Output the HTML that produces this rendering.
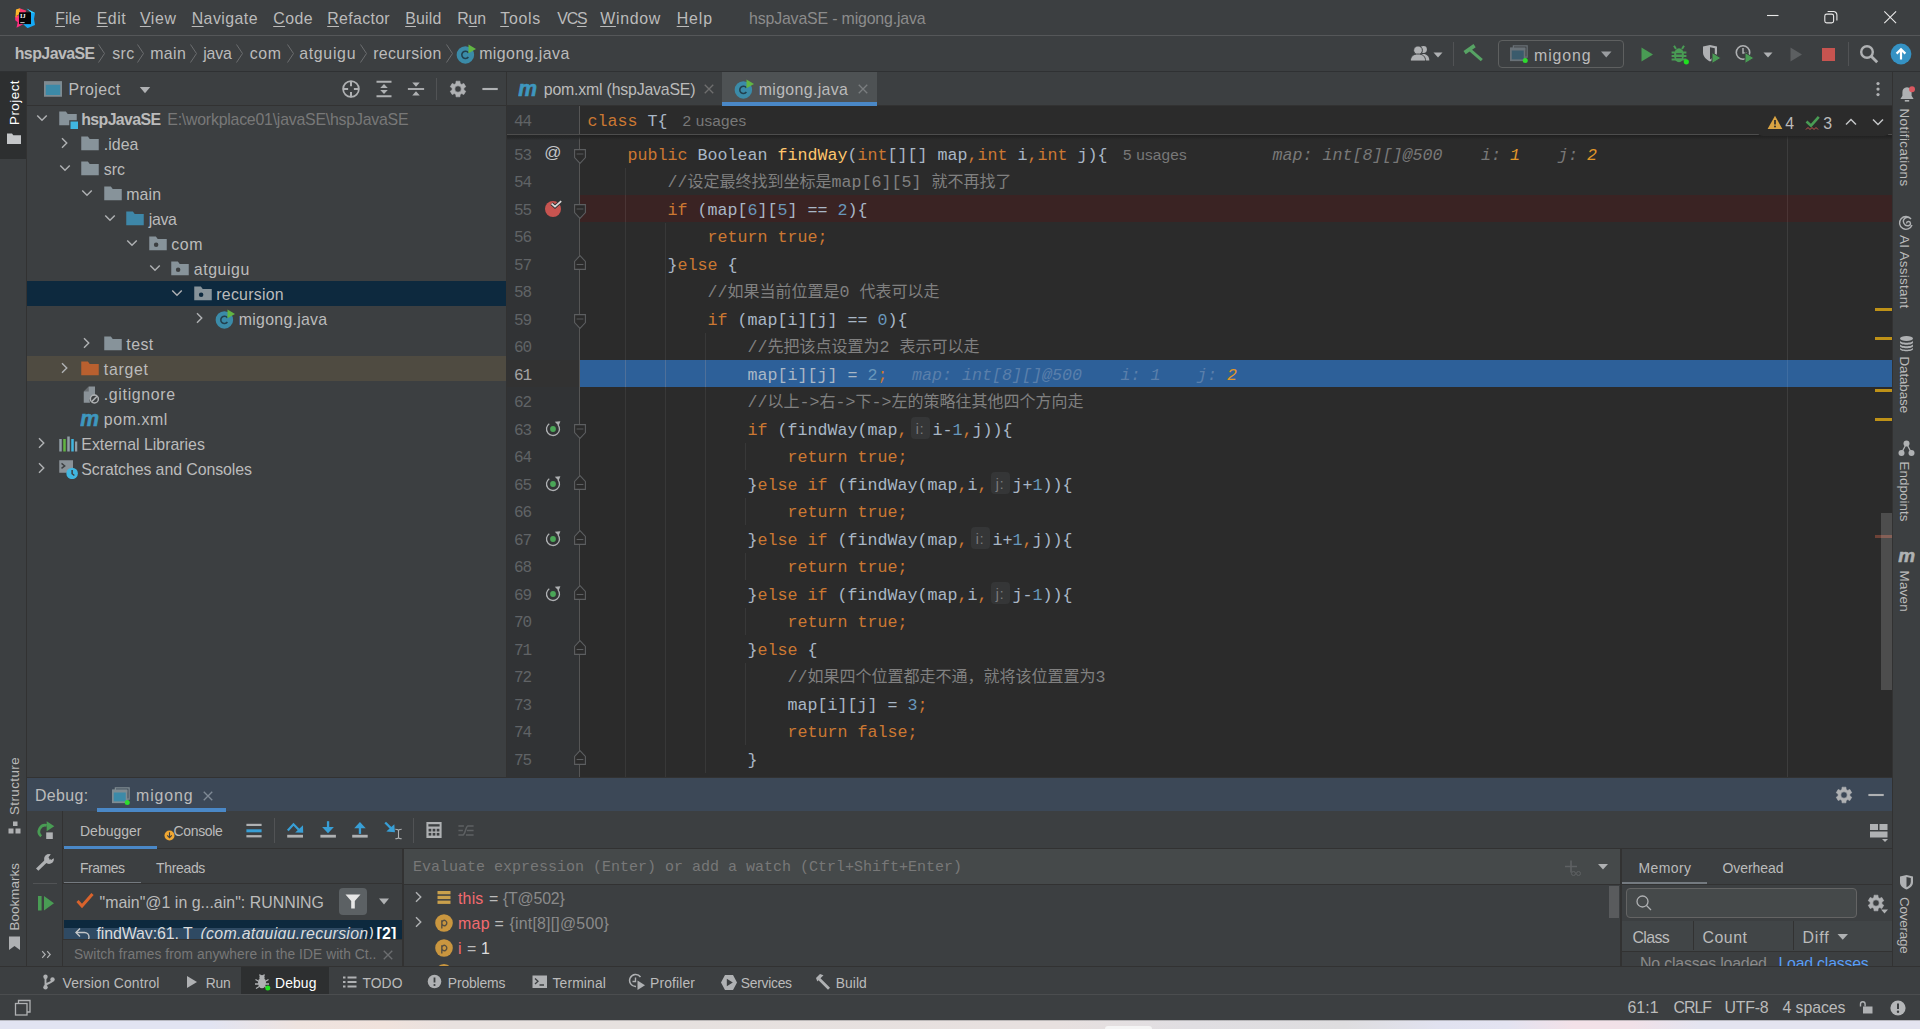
<!DOCTYPE html><html lang="en"><head><meta charset="utf-8"><title>hspJavaSE - migong.java</title><style>html,body{margin:0;padding:0}body{width:1920px;height:1029px;overflow:hidden;position:relative;background:#3c3f41;font-family:"Liberation Sans","Noto Sans CJK SC",sans-serif;font-size:15px;color:#bbb}.a{position:absolute}.t{position:absolute;white-space:pre;line-height:20px}.m{font-family:"Liberation Mono","Noto Sans CJK SC",monospace}u{text-decoration-thickness:1px;text-underline-offset:2px}</style></head><body><header class="a" id="titlebar" style="left:0;top:0">
<div class="a" style="left:0px;top:0px;width:1920px;height:36px;background:#3c3f41;"></div>
<div class="a" style="left:0px;top:35px;width:1920px;height:1px;background:#555759;"></div>
<svg class="a" style="left:15px;top:8px;" width="20" height="20" viewBox="0 0 20 20"><path d="M1 1.500L4.8 0.2 7 4.5 0.5 8.500z" fill="#fcb62a"/><path d="M4.6 0.300l6.8 2.4-2 3-4.4-.200z" fill="#fb3a6f"/><path d="M0.2 8.500l4-1.5 4.5 9-7.2 3.8 1.2-5.6-2.5-2z" fill="#fd2f7e"/><path d="M0.2 8.500l1.8-2 .5 3.500z" fill="#fd8a1c"/><path d="M11.5 0.500L20 5l-1 6 1 6-7.5 3.200L8 16l8-1V4z" fill="#15a9f5"/><path d="M11.5 0.500l5 4.5 3.5 0z" fill="#3bd0fb"/><rect x="4" y="4.3" width="12" height="11.8" fill="#070707"/><rect x="5.3" y="14.3" width="4.3" height="0.8" fill="#fff"/><text x="5" y="10.2" font-family="Liberation Serif,serif" font-size="6.2" font-weight="700" fill="#fff">IJ</text></svg>
<span class="t" style="left:55.2px;top:9px;font-size:15.9px;letter-spacing:0.044px;"><u>F</u>ile</span>
<span class="t" style="left:96.7px;top:9px;font-size:15.9px;letter-spacing:0.523px;"><u>E</u>dit</span>
<span class="t" style="left:139.89999999999998px;top:9px;font-size:15.9px;letter-spacing:0.611px;"><u>V</u>iew</span>
<span class="t" style="left:191.7px;top:9px;font-size:15.9px;letter-spacing:0.446px;"><u>N</u>avigate</span>
<span class="t" style="left:273.2px;top:9px;font-size:15.9px;letter-spacing:0.450px;"><u>C</u>ode</span>
<span class="t" style="left:327.2px;top:9px;font-size:15.9px;letter-spacing:0.340px;"><u>R</u>efactor</span>
<span class="t" style="left:405.2px;top:9px;font-size:15.9px;letter-spacing:0.188px;"><u>B</u>uild</span>
<span class="t" style="left:457.2px;top:9px;font-size:15.9px;letter-spacing:-0.124px;">R<u>u</u>n</span>
<span class="t" style="left:500.2px;top:9px;font-size:15.9px;letter-spacing:0.738px;"><u>T</u>ools</span>
<span class="t" style="left:557.2px;top:9px;font-size:15.9px;letter-spacing:-1.129px;">VC<u>S</u></span>
<span class="t" style="left:600.2px;top:9px;font-size:15.9px;letter-spacing:0.711px;"><u>W</u>indow</span>
<span class="t" style="left:676.7px;top:9px;font-size:15.9px;letter-spacing:0.899px;"><u>H</u>elp</span>
<span class="t" style="left:749px;top:9px;font-size:15.9px;color:#8c8c8c;letter-spacing:-0.161px;">hspJavaSE - migong.java</span>
<svg class="a" style="left:1760px;top:5px;" width="24" height="24" viewBox="0 0 24 24"><path d="M7 10.500h11.5" stroke="#e8e8e8" stroke-width="1.1"/></svg>
<svg class="a" style="left:1818px;top:6px;" width="24" height="24" viewBox="0 0 24 24"><rect x="6.8" y="8.1" width="8.8" height="8.8" rx="1.9" fill="none" stroke="#e8e8e8" stroke-width="1.1"/><path d="M9.6 5.500h5.900a3.4 3.4 0 0 1 3.4 3.400v5.7" fill="none" stroke="#e8e8e8" stroke-width="1.1"/></svg>
<svg class="a" style="left:1878px;top:6px;" width="24" height="24" viewBox="0 0 24 24"><path d="M6.3 5.300l11.8 11.800M18.1 5.300L6.3 17.1" stroke="#e8e8e8" stroke-width="1.1"/></svg>
<div class="a" style="left:0px;top:36px;width:1920px;height:36px;background:#3c3f41;"></div>
<div class="a" style="left:0px;top:71px;width:1920px;height:1px;background:#2f3133;"></div>
<span class="t" style="left:14.7px;top:44px;font-size:15.9px;font-weight:700;letter-spacing:-0.535px;">hspJavaSE</span>
<span class="t" style="left:112.2px;top:44px;font-size:15.9px;letter-spacing:0.438px;">src</span>
<span class="t" style="left:150.2px;top:44px;font-size:15.9px;letter-spacing:0.387px;">main</span>
<span class="t" style="left:203.2px;top:44px;font-size:15.9px;letter-spacing:-0.164px;">java</span>
<span class="t" style="left:249.7px;top:44px;font-size:15.9px;letter-spacing:0.656px;">com</span>
<span class="t" style="left:299.2px;top:44px;font-size:15.9px;letter-spacing:0.694px;">atguigu</span>
<span class="t" style="left:373.2px;top:44px;font-size:15.9px;letter-spacing:0.349px;">recursion</span>
<span class="t" style="left:479.2px;top:44px;font-size:15.9px;letter-spacing:0.438px;">migong.java</span>
<svg class="a" style="left:97px;top:43px;" width="12" height="24" viewBox="0 0 12 24"><path d="M1.5 1.500l6 9-6 9" fill="none" stroke="#6b6d6f" stroke-width="1"/></svg>
<svg class="a" style="left:136px;top:43px;" width="12" height="24" viewBox="0 0 12 24"><path d="M1.5 1.500l6 9-6 9" fill="none" stroke="#6b6d6f" stroke-width="1"/></svg>
<svg class="a" style="left:189px;top:43px;" width="12" height="24" viewBox="0 0 12 24"><path d="M1.5 1.500l6 9-6 9" fill="none" stroke="#6b6d6f" stroke-width="1"/></svg>
<svg class="a" style="left:235px;top:43px;" width="12" height="24" viewBox="0 0 12 24"><path d="M1.5 1.500l6 9-6 9" fill="none" stroke="#6b6d6f" stroke-width="1"/></svg>
<svg class="a" style="left:286px;top:43px;" width="12" height="24" viewBox="0 0 12 24"><path d="M1.5 1.500l6 9-6 9" fill="none" stroke="#6b6d6f" stroke-width="1"/></svg>
<svg class="a" style="left:359px;top:43px;" width="12" height="24" viewBox="0 0 12 24"><path d="M1.5 1.500l6 9-6 9" fill="none" stroke="#6b6d6f" stroke-width="1"/></svg>
<svg class="a" style="left:445px;top:43px;" width="12" height="24" viewBox="0 0 12 24"><path d="M1.5 1.500l6 9-6 9" fill="none" stroke="#6b6d6f" stroke-width="1"/></svg>
<svg class="a" style="left:456px;top:44px;" width="20" height="20" viewBox="0 0 16 16"><circle cx="7.5" cy="8.7" r="7" fill="#3b8ba8"/><path d="M9.9 7A2.9 2.9 0 1 0 9.9 10.4" fill="none" stroke="#22404e" stroke-width="1.25"/><path d="M10 0.3L16 3.9 10 7.4z" fill="#62b543"/></svg>
<svg class="a" style="left:1409px;top:43px;" width="22" height="22" viewBox="0 0 22 22"><circle cx="14.5" cy="6.5" r="3.4" fill="#afb1b3"/><path d="M9.5 17.500c0-4.2 2-6.4 5-6.400s5.8 2.2 5.8 6.400z" fill="#afb1b3"/><circle cx="9" cy="7.3" r="4.4" fill="#afb1b3" stroke="#3c3f41" stroke-width="1"/><path d="M1.4 18c0-4.6 3-7 7.6-7s7.6 2.4 7.6 7z" fill="#afb1b3" stroke="#3c3f41" stroke-width=".9"/></svg>
<svg class="a" style="left:1433px;top:51px;" width="10" height="8" viewBox="0 0 10 8"><path d="M0.5 1.5h9L5 6.5z" fill="#afb1b3"/></svg>
<div class="a" style="left:1453px;top:42px;width:1px;height:24px;background:#515355;"></div>
<svg class="a" style="left:1462px;top:43px;" width="22" height="22" viewBox="0 0 22 22"><path d="M2.6 9.600L12.6 2.6" stroke="#57a364" stroke-width="3.8"/><path d="M8 6.800L19.8 17.2" stroke="#57a364" stroke-width="3"/></svg>
<div class="a" style="left:1498px;top:40px;width:124px;height:26px;border:1px solid #5e6060;border-radius:4px"></div>
<svg class="a" style="left:1509px;top:44px;" width="20" height="20" viewBox="0 0 16 16"><rect x="3.5" y="1.5" width="11" height="9" fill="none" stroke="#697177" stroke-width="1"/><rect x="1.5" y="3.5" width="11" height="9.5" fill="#3a5b6c" stroke="#697177" stroke-width="1.4"/><rect x="1" y="3" width="12" height="2.2" fill="#697177"/><circle cx="13" cy="13.2" r="2" fill="#2edb2e"/></svg>
<span class="t" style="left:1534px;top:46px;font-size:15.9px;letter-spacing:0.896px;">migong</span>
<svg class="a" style="left:1600px;top:50px;" width="13" height="9" viewBox="0 0 13 9"><path d="M1 1.5h10.5L6.25 7.5z" fill="#9a9da0"/></svg>
<svg class="a" style="left:1640px;top:46px;" width="16" height="18" viewBox="0 0 16 18"><path d="M1.5 1.5v14L13 8.5z" fill="#499c54"/></svg>
<svg class="a" style="left:1668px;top:43px;" width="22" height="22" viewBox="0 0 22 22"><path d="M3.6 9.500h14.800M3.6 13h14.800M3.6 16.500h14.800M8 6L6 2.800M14 6l2-3.2" stroke="#499c54" stroke-width="2"/><ellipse cx="11" cy="12.3" rx="4.9" ry="7" fill="#499c54"/><path d="M8.2 10.800h5.600M8.2 14.600h5.6" stroke="#3c3f41" stroke-width="1.3"/><circle cx="18.3" cy="18.8" r="2.6" fill="#1fe01f"/></svg>
<svg class="a" style="left:1701px;top:43px;" width="22" height="22" viewBox="0 0 22 22"><path d="M2 3.5L9 2l7 1.5v6c0 4-3 7-7 9-4-2-7-5-7-9z" fill="#afb1b3"/><path d="M9 4.2v12.2c3-1.6 4.8-3.9 4.8-6.9V5.2z" fill="#3c3f41"/><path d="M11 9.5v11l9-5.5z" fill="#499c54" stroke="#3c3f41" stroke-width="1"/></svg>
<svg class="a" style="left:1734px;top:43px;" width="22" height="22" viewBox="0 0 22 22"><circle cx="9" cy="9.5" r="6.7" fill="none" stroke="#afb1b3" stroke-width="1.6"/><path d="M9 5v5h3.5" fill="none" stroke="#afb1b3" stroke-width="1.5"/><path d="M11 9.5v11l9-5.5z" fill="#499c54" stroke="#3c3f41" stroke-width="1"/></svg>
<svg class="a" style="left:1763px;top:51px;" width="10" height="8" viewBox="0 0 10 8"><path d="M0.5 1.5h9L5 6.5z" fill="#afb1b3"/></svg>
<svg class="a" style="left:1789px;top:46px;" width="16" height="18" viewBox="0 0 16 18"><path d="M1.5 1.5v14L13 8.5z" fill="#5c5f61"/></svg>
<div class="a" style="left:1822px;top:48px;width:13px;height:12.5px;background:#c75450;"></div>
<div class="a" style="left:1848px;top:42px;width:1px;height:24px;background:#515355;"></div>
<svg class="a" style="left:1858px;top:43px;" width="22" height="22" viewBox="0 0 22 22"><circle cx="9" cy="9" r="5.8" fill="none" stroke="#afb1b3" stroke-width="2.4"/><path d="M13.2 13.2l6 6" stroke="#afb1b3" stroke-width="2.8"/></svg>
<svg class="a" style="left:1890px;top:43px;" width="22" height="22" viewBox="0 0 22 22"><circle cx="11" cy="11" r="10.4" fill="#3592c4"/><path d="M11 16.5V7M6.6 10.6L11 6.2l4.4 4.4" fill="none" stroke="#fff" stroke-width="2.2"/></svg>
</header>
<aside class="a" id="project-tool-window" style="left:0;top:0">
<div class="a" style="left:0px;top:72px;width:27px;height:895px;background:#3c3f41;"></div>
<div class="a" style="left:26px;top:72px;width:1px;height:895px;background:#323232;"></div>
<div class="a" style="left:0px;top:72px;width:26px;height:87px;background:#2d2f30;"></div>
<span class="t" style="left:0px;top:0px;font-size:13.4px;color:#ffffff;letter-spacing:0.473px;transform-origin:0 0;transform:translate(5.2px,125px) rotate(-90deg);left:0;top:0;">Project</span>
<svg class="a" style="left:6px;top:131px;" width="16" height="16" viewBox="0 0 16 16"><path d="M1 2.5h5l1.3 1.8H15V13H1z" fill="#c4c6c8"/></svg>
<span class="t" style="left:0px;top:0px;font-size:13.4px;letter-spacing:0.408px;transform-origin:0 0;transform:translate(5.2px,815px) rotate(-90deg);left:0;top:0;">Structure</span>
<svg class="a" style="left:8px;top:821px;" width="14" height="14" viewBox="0 0 14 14"><rect x="5" y="0.5" width="4.5" height="4.5" fill="#afb1b3"/><rect x="0.5" y="7.5" width="5" height="5" fill="#afb1b3"/><rect x="7.5" y="7.5" width="5" height="5" fill="#afb1b3"/></svg>
<span class="t" style="left:0px;top:0px;font-size:13.4px;letter-spacing:0.057px;transform-origin:0 0;transform:translate(5.2px,930.5px) rotate(-90deg);left:0;top:0;">Bookmarks</span>
<svg class="a" style="left:8px;top:936px;" width="14" height="15" viewBox="0 0 14 15"><path d="M1 0.5h11v13.5l-5.5-4-5.5 4z" fill="#afb1b3"/></svg>
<div class="a" style="left:27px;top:72px;width:479px;height:705px;background:#3c3f41;"></div>
<div class="a" style="left:506px;top:72px;width:1px;height:705px;background:#323232;"></div>
<div class="a" style="left:27px;top:105px;width:479px;height:1px;background:#323232;"></div>
<svg class="a" style="left:43px;top:79px;" width="20" height="20" viewBox="0 0 16 16"><rect x="1.5" y="2.5" width="13" height="11" fill="#3c8aa8" stroke="#7f8b91" stroke-width="1.4"/><rect x="1" y="2" width="14" height="2.6" fill="#7f8b91"/></svg>
<span class="t" style="left:68.5px;top:80px;font-size:15.9px;letter-spacing:0.362px;">Project</span>
<svg class="a" style="left:139px;top:85px;" width="12" height="10" viewBox="0 0 12 10"><path d="M0.8 2h10.4L6 8.2z" fill="#afb1b3"/></svg>
<svg class="a" style="left:341px;top:79px;" width="20" height="20" viewBox="0 0 16 16"><circle cx="8" cy="8" r="6.3" fill="none" stroke="#afb1b3" stroke-width="1.4"/><circle cx="8" cy="8" r="2.1" fill="none" stroke="#afb1b3" stroke-width="0"/><path d="M8 1.5v4.2M8 10.3v4.2M1.5 8h4.2M10.3 8h4.2" stroke="#afb1b3" stroke-width="1.6"/></svg>
<svg class="a" style="left:374px;top:79px;" width="20" height="20" viewBox="0 0 16 16"><path d="M2 2.2h12M2 13.8h12" stroke="#afb1b3" stroke-width="1.5"/><path d="M8 4l3 3.2H5zM8 12l3-3.2H5z" fill="#afb1b3"/></svg>
<svg class="a" style="left:406px;top:79px;" width="20" height="20" viewBox="0 0 16 16"><path d="M1.5 8h13" stroke="#afb1b3" stroke-width="1.5"/><path d="M8 6.2l3-3.4H5zM8 9.8l3 3.4H5z" fill="#afb1b3"/></svg>
<div class="a" style="left:436px;top:78px;width:1px;height:22px;background:#515355;"></div>
<svg class="a" style="left:448px;top:79px;" width="20" height="20" viewBox="0 0 16 16"><path fill-rule="evenodd" fill="#afb1b3" stroke="#afb1b3" stroke-width="0.5" stroke-linejoin="round" d="M9.70 3.57 L9.56 1.74 L6.44 1.74 L6.30 3.57 L5.01 4.31 L3.36 3.52 L1.80 6.22 L3.31 7.26 L3.31 8.74 L1.80 9.78 L3.36 12.48 L5.01 11.69 L6.30 12.43 L6.44 14.26 L9.56 14.26 L9.70 12.43 L10.99 11.69 L12.64 12.48 L14.20 9.78 L12.69 8.74 L12.69 7.26 L14.20 6.22 L12.64 3.52 L10.99 4.31z M5.40 8a2.6 2.6 0 1 0 5.2 0a2.6 2.6 0 1 0 -5.2 0z"/></svg>
<svg class="a" style="left:480px;top:79px;" width="20" height="20" viewBox="0 0 16 16"><path d="M1.9 8h12.3" stroke="#afb1b3" stroke-width="1.7"/></svg>
<svg class="a" style="left:32.0px;top:109px;" width="20" height="20" viewBox="0 0 16 16"><path d="M4.2 5.2l3.8 3.8 3.8-3.8" fill="none" stroke="#afb1b3" stroke-width="1.15"/></svg>
<svg class="a" style="left:57.75px;top:108.5px;" width="20" height="20" viewBox="0 0 16 16"><path d="M1 2h5.3l1.5 2H15v5H9v4H1z" fill="#87939a"/><rect x="10" y="10" width="6" height="6" fill="#40b6e0"/></svg>
<span class="t" style="left:81.3px;top:110px;font-size:15.9px;font-weight:700;letter-spacing:-0.635px;">hspJavaSE</span>
<span class="t" style="left:167.3px;top:110px;font-size:15.9px;color:#787878;letter-spacing:-0.233px;">E:\workplace01\javaSE\hspJavaSE</span>
<svg class="a" style="left:54.5px;top:134px;" width="20" height="20" viewBox="0 0 16 16"><path d="M5.6 3.4l3.8 3.8-3.8 3.8" fill="none" stroke="#afb1b3" stroke-width="1.15"/></svg>
<svg class="a" style="left:80.25px;top:133.5px;" width="20" height="20" viewBox="0 0 16 16"><path d="M1 2h5.3l1.5 2H15v9H1z" fill="#87939a"/></svg>
<span class="t" style="left:103.8px;top:135px;font-size:15.9px;letter-spacing:0.026px;">.idea</span>
<svg class="a" style="left:54.5px;top:159px;" width="20" height="20" viewBox="0 0 16 16"><path d="M4.2 5.2l3.8 3.8 3.8-3.8" fill="none" stroke="#afb1b3" stroke-width="1.15"/></svg>
<svg class="a" style="left:80.25px;top:158.5px;" width="20" height="20" viewBox="0 0 16 16"><path d="M1 2h5.3l1.5 2H15v9H1z" fill="#87939a"/></svg>
<span class="t" style="left:103.8px;top:160px;font-size:15.9px;letter-spacing:-0.029px;">src</span>
<svg class="a" style="left:77.0px;top:184px;" width="20" height="20" viewBox="0 0 16 16"><path d="M4.2 5.2l3.8 3.8 3.8-3.8" fill="none" stroke="#afb1b3" stroke-width="1.15"/></svg>
<svg class="a" style="left:102.75px;top:183.5px;" width="20" height="20" viewBox="0 0 16 16"><path d="M1 2h5.3l1.5 2H15v9H1z" fill="#87939a"/></svg>
<span class="t" style="left:126.3px;top:185px;font-size:15.9px;letter-spacing:0.087px;">main</span>
<svg class="a" style="left:99.5px;top:209px;" width="20" height="20" viewBox="0 0 16 16"><path d="M4.2 5.2l3.8 3.8 3.8-3.8" fill="none" stroke="#afb1b3" stroke-width="1.15"/></svg>
<svg class="a" style="left:125.25px;top:208.5px;" width="20" height="20" viewBox="0 0 16 16"><path d="M1 2h5.3l1.5 2H15v9H1z" fill="#3e87a8"/></svg>
<span class="t" style="left:148.8px;top:210px;font-size:15.9px;letter-spacing:-0.389px;">java</span>
<svg class="a" style="left:122.0px;top:234px;" width="20" height="20" viewBox="0 0 16 16"><path d="M4.2 5.2l3.8 3.8 3.8-3.8" fill="none" stroke="#afb1b3" stroke-width="1.15"/></svg>
<svg class="a" style="left:147.75px;top:233.5px;" width="20" height="20" viewBox="0 0 16 16"><path d="M1 2h5.3l1.5 2H15v9H1z" fill="#87939a"/><circle cx="6.5" cy="8.5" r="1.8" fill="#3c3f41"/></svg>
<span class="t" style="left:171.3px;top:235px;font-size:15.9px;letter-spacing:0.523px;">com</span>
<svg class="a" style="left:144.5px;top:259px;" width="20" height="20" viewBox="0 0 16 16"><path d="M4.2 5.2l3.8 3.8 3.8-3.8" fill="none" stroke="#afb1b3" stroke-width="1.15"/></svg>
<svg class="a" style="left:170.25px;top:258.5px;" width="20" height="20" viewBox="0 0 16 16"><path d="M1 2h5.3l1.5 2H15v9H1z" fill="#87939a"/><circle cx="6.5" cy="8.5" r="1.8" fill="#3c3f41"/></svg>
<span class="t" style="left:193.8px;top:260px;font-size:15.9px;letter-spacing:0.566px;">atguigu</span>
<div class="a" style="left:27px;top:281px;width:479px;height:25px;background:#0d293e;"></div>
<svg class="a" style="left:167.0px;top:284px;" width="20" height="20" viewBox="0 0 16 16"><path d="M4.2 5.2l3.8 3.8 3.8-3.8" fill="none" stroke="#afb1b3" stroke-width="1.15"/></svg>
<svg class="a" style="left:192.75px;top:283.5px;" width="20" height="20" viewBox="0 0 16 16"><path d="M1 2h5.3l1.5 2H15v9H1z" fill="#87939a"/><circle cx="6.5" cy="8.5" r="1.8" fill="#0d293e"/></svg>
<span class="t" style="left:216.3px;top:285px;font-size:15.9px;letter-spacing:0.249px;">recursion</span>
<svg class="a" style="left:189.5px;top:309px;" width="20" height="20" viewBox="0 0 16 16"><path d="M5.6 3.4l3.8 3.8-3.8 3.8" fill="none" stroke="#afb1b3" stroke-width="1.15"/></svg>
<svg class="a" style="left:215.25px;top:308.5px;" width="20" height="20" viewBox="0 0 16 16"><circle cx="7.5" cy="8.7" r="7" fill="#3b8ba8"/><path d="M9.9 7A2.9 2.9 0 1 0 9.9 10.4" fill="none" stroke="#22404e" stroke-width="1.25"/><path d="M10 0.3L16 3.9 10 7.4z" fill="#62b543"/></svg>
<span class="t" style="left:238.8px;top:310px;font-size:15.9px;letter-spacing:0.265px;">migong.java</span>
<svg class="a" style="left:77.0px;top:334px;" width="20" height="20" viewBox="0 0 16 16"><path d="M5.6 3.4l3.8 3.8-3.8 3.8" fill="none" stroke="#afb1b3" stroke-width="1.15"/></svg>
<svg class="a" style="left:102.75px;top:333.5px;" width="20" height="20" viewBox="0 0 16 16"><path d="M1 2h5.3l1.5 2H15v9H1z" fill="#87939a"/></svg>
<span class="t" style="left:126.3px;top:335px;font-size:15.9px;letter-spacing:0.444px;">test</span>
<div class="a" style="left:27px;top:356px;width:479px;height:25px;background:#4f4b41;"></div>
<svg class="a" style="left:54.5px;top:359px;" width="20" height="20" viewBox="0 0 16 16"><path d="M5.6 3.4l3.8 3.8-3.8 3.8" fill="none" stroke="#afb1b3" stroke-width="1.15"/></svg>
<svg class="a" style="left:80.25px;top:358.5px;" width="20" height="20" viewBox="0 0 16 16"><path d="M1 2h5.3l1.5 2H15v9H1z" fill="#b9602f"/></svg>
<span class="t" style="left:103.8px;top:360px;font-size:15.9px;letter-spacing:0.710px;">target</span>
<svg class="a" style="left:80.25px;top:383.5px;" width="20" height="20" viewBox="0 0 16 16"><path d="M3 6l4-4h5v7.2a4 4 0 0 0-4 5.8H3z" fill="#8a9298"/><path d="M3 6h4V2z" fill="#3c3f41" opacity=".45"/><circle cx="11.5" cy="12" r="3.2" fill="none" stroke="#afb1b3" stroke-width="1.2"/><path d="M9.4 14.1l4.2-4.2" stroke="#afb1b3" stroke-width="1.2"/></svg>
<span class="t" style="left:103.8px;top:385px;font-size:15.9px;letter-spacing:0.662px;">.gitignore</span>
<svg class="a" style="left:80.25px;top:408.5px;" width="20" height="20" viewBox="0 0 16 16"><text x="0.2" y="13.4" font-family="Liberation Sans,sans-serif" font-size="17" font-weight="700" font-style="italic" fill="#3e97bf" stroke="#3e97bf" stroke-width="0.5" textLength="15" lengthAdjust="spacingAndGlyphs">m</text></svg>
<span class="t" style="left:103.8px;top:410px;font-size:15.9px;letter-spacing:0.579px;">pom.xml</span>
<svg class="a" style="left:32.0px;top:434px;" width="20" height="20" viewBox="0 0 16 16"><path d="M5.6 3.4l3.8 3.8-3.8 3.8" fill="none" stroke="#afb1b3" stroke-width="1.15"/></svg>
<svg class="a" style="left:57.75px;top:433.5px;" width="20" height="20" viewBox="0 0 16 16"><rect x="1" y="4" width="2" height="10" fill="#909da5"/><rect x="4.2" y="4" width="2" height="10" fill="#62b543"/><rect x="7.4" y="2" width="2" height="12" fill="#909da5"/><rect x="10.6" y="4" width="2" height="10" fill="#40b6e0"/><rect x="13.6" y="6" width="1.8" height="8" fill="#909da5"/></svg>
<span class="t" style="left:81.3px;top:435px;font-size:15.9px;letter-spacing:-0.003px;">External Libraries</span>
<svg class="a" style="left:32.0px;top:459px;" width="20" height="20" viewBox="0 0 16 16"><path d="M5.6 3.4l3.8 3.8-3.8 3.8" fill="none" stroke="#afb1b3" stroke-width="1.15"/></svg>
<svg class="a" style="left:57.75px;top:458.5px;" width="20" height="20" viewBox="0 0 16 16"><path d="M1 1h11v7.2a5 5 0 0 0-5 2.8H1z" fill="#8a9298"/><path d="M2.8 3.5l2.6 2-2.6 2" fill="none" stroke="#3c3f41" stroke-width="1.1"/><circle cx="11.3" cy="11.5" r="4.6" fill="#40b6e0"/><path d="M11.3 8.8v3l1.8 1.4" fill="none" stroke="#3c3f41" stroke-width="1.2"/></svg>
<span class="t" style="left:81.3px;top:460px;font-size:15.9px;letter-spacing:-0.075px;">Scratches and Consoles</span>
</aside>
<main class="a" id="editor" style="left:0;top:0">
<div class="a" style="left:507px;top:72px;width:1385px;height:34px;background:#3c3f41;"></div>
<div class="a" style="left:507px;top:105px;width:1385px;height:1px;background:#323232;"></div>
<svg class="a" style="left:517.5px;top:79px;" width="20" height="20" viewBox="0 0 16 16"><text x="0.2" y="13.4" font-family="Liberation Sans,sans-serif" font-size="17" font-weight="700" font-style="italic" fill="#3e97bf" stroke="#3e97bf" stroke-width="0.5" textLength="15" lengthAdjust="spacingAndGlyphs">m</text></svg>
<span class="t" style="left:543.8px;top:80px;font-size:15.9px;letter-spacing:-0.207px;">pom.xml (hspJavaSE)</span>
<svg class="a" style="left:699px;top:79px;" width="20" height="20" viewBox="0 0 16 16"><path d="M4.6 4.6l6.8 6.8M11.4 4.6l-6.8 6.8" stroke="#6e6e6e" stroke-width="1.1"/></svg>
<div class="a" style="left:722px;top:72px;width:155px;height:33px;background:#4e5254;"></div>
<div class="a" style="left:722px;top:102px;width:155px;height:4px;background:#4a88c7;"></div>
<svg class="a" style="left:733.5px;top:79px;" width="20" height="20" viewBox="0 0 16 16"><circle cx="7.5" cy="8.7" r="7" fill="#3b8ba8"/><path d="M9.9 7A2.9 2.9 0 1 0 9.9 10.4" fill="none" stroke="#22404e" stroke-width="1.25"/><path d="M10 0.3L16 3.9 10 7.4z" fill="#62b543"/></svg>
<span class="t" style="left:758.7px;top:80px;font-size:15.9px;letter-spacing:0.347px;">migong.java</span>
<svg class="a" style="left:853px;top:79px;" width="20" height="20" viewBox="0 0 16 16"><path d="M4.6 4.6l6.8 6.8M11.4 4.6l-6.8 6.8" stroke="#7a7d7f" stroke-width="1.1"/></svg>
<svg class="a" style="left:1868px;top:79px;" width="20" height="20" viewBox="0 0 16 16"><circle cx="8" cy="3.6" r="1.3" fill="#afb1b3"/><circle cx="8" cy="8" r="1.3" fill="#afb1b3"/><circle cx="8" cy="12.4" r="1.3" fill="#afb1b3"/></svg>
<div class="a" style="left:507px;top:106px;width:1385px;height:671px;background:#2b2b2b;"></div>
<div class="a" style="left:507px;top:106px;width:72px;height:671px;background:#313335;"></div>
<div class="a" style="left:579px;top:106px;width:1px;height:671px;background:#555555;"></div>
<div class="a" style="left:580px;top:195px;width:1312px;height:27px;background:#3a2323;"></div>
<div class="a" style="left:580px;top:360px;width:1312px;height:27px;background:#2d6099;"></div>
<div class="a" style="left:507px;top:360px;width:72px;height:27px;background:#323232;"></div>
<div class="a" style="left:1787px;top:136px;width:1px;height:641px;background:rgba(255,255,255,0.085);"></div>
<div class="a" style="left:625px;top:167.5px;width:1px;height:609.5px;background:#383838;"></div>
<div class="a" style="left:665px;top:222.5px;width:1px;height:554.5px;background:#383838;"></div>
<div class="a" style="left:705px;top:332.5px;width:1px;height:440.0px;background:#383838;"></div>
<div class="a" style="left:745px;top:442.5px;width:1px;height:27.5px;background:#383838;"></div>
<div class="a" style="left:745px;top:497.5px;width:1px;height:27.5px;background:#383838;"></div>
<div class="a" style="left:745px;top:552.5px;width:1px;height:27.5px;background:#383838;"></div>
<div class="a" style="left:745px;top:607.5px;width:1px;height:27.5px;background:#383838;"></div>
<div class="a" style="left:745px;top:662.5px;width:1px;height:82.5px;background:#383838;"></div>
<div class="a" style="left:625px;top:360px;width:1px;height:27px;background:#4f7099;"></div>
<div class="a" style="left:665px;top:360px;width:1px;height:27px;background:#4f7099;"></div>
<div class="a" style="left:705px;top:360px;width:1px;height:27px;background:#4f7099;"></div>
<div class="a" style="left:625px;top:195px;width:1px;height:27px;background:#4a3535;"></div>
<div class="a" style="left:507px;top:106px;width:1385px;height:28px;background:#2b2b2b;"></div>
<div class="a" style="left:507px;top:106px;width:72px;height:28px;background:#313335;"></div>
<div class="a" style="left:579px;top:106px;width:1px;height:28px;background:#555555;"></div>
<div class="a" style="left:507px;top:134px;width:1385px;height:1px;background:#4d4d4d;"></div>
<div class="a" style="left:507px;top:135px;width:1385px;height:5px;background:linear-gradient(#1f1f1f,rgba(43,43,43,0))"></div>
<div class="a" style="left:507px;top:135px;width:73px;height:5px;background:linear-gradient(#262829,rgba(49,51,53,0))"></div>
<span class="t m" style="left:514px;top:112px;font-size:16px;color:#606366;letter-spacing:-1.100px;">44</span>
<span class="t m" style="left:587.5px;top:112px;font-size:16.66px;color:#cc7832;">class</span>
<span class="t m" style="left:647.5px;top:112px;font-size:16.66px;color:#a9b7c6;">T{</span>
<span class="t" style="left:682.5px;top:111px;font-size:15.37px;color:#787878;letter-spacing:0.207px;">2 usages</span>
<div class="a" style="left:1757px;top:106px;width:133px;height:30px;background:#2b2b2b;border-radius:0 0 6px 6px"></div>
<svg class="a" style="left:1767px;top:115px;" width="16" height="15" viewBox="0 0 16 15"><path d="M8 0.8L15.4 14H.6z" fill="#d9a343"/><path d="M8 5v4.6" stroke="#2b2b2b" stroke-width="1.7"/><circle cx="8" cy="11.6" r="1" fill="#2b2b2b"/></svg>
<span class="t" style="left:1785.3px;top:114px;font-size:15.9px;">4</span>
<svg class="a" style="left:1805px;top:114px;" width="16" height="18" viewBox="0 0 16 18"><path d="M1.5 7.5l4.5 4.2L13.8 2.8" fill="none" stroke="#499c54" stroke-width="2.6"/><path d="M1 15.5l2-2 2 2 2-2 2 2 2-2 2 2" fill="none" stroke="#c75450" stroke-width="1"/></svg>
<span class="t" style="left:1823.3px;top:114px;font-size:15.9px;">3</span>
<svg class="a" style="left:1844px;top:116px;" width="14" height="12" viewBox="0 0 14 12"><path d="M2 8.5l5-5 5 5" fill="none" stroke="#c4c6c8" stroke-width="1.5"/></svg>
<svg class="a" style="left:1871px;top:116px;" width="14" height="12" viewBox="0 0 14 12"><path d="M2 3.5l5 5 5-5" fill="none" stroke="#c4c6c8" stroke-width="1.5"/></svg>
<span class="t m" style="left:514px;top:146px;font-size:16px;color:#606366;letter-spacing:-1.100px;">53</span>
<span class="t m" style="left:514px;top:173px;font-size:16px;color:#606366;letter-spacing:-1.100px;">54</span>
<span class="t m" style="left:514px;top:201px;font-size:16px;color:#606366;letter-spacing:-1.100px;">55</span>
<span class="t m" style="left:514px;top:228px;font-size:16px;color:#606366;letter-spacing:-1.100px;">56</span>
<span class="t m" style="left:514px;top:256px;font-size:16px;color:#606366;letter-spacing:-1.100px;">57</span>
<span class="t m" style="left:514px;top:283px;font-size:16px;color:#606366;letter-spacing:-1.100px;">58</span>
<span class="t m" style="left:514px;top:311px;font-size:16px;color:#606366;letter-spacing:-1.100px;">59</span>
<span class="t m" style="left:514px;top:338px;font-size:16px;color:#606366;letter-spacing:-1.100px;">60</span>
<span class="t m" style="left:514px;top:366px;font-size:16px;color:#a4a3a3;letter-spacing:-1.100px;">61</span>
<span class="t m" style="left:514px;top:393px;font-size:16px;color:#606366;letter-spacing:-1.100px;">62</span>
<span class="t m" style="left:514px;top:421px;font-size:16px;color:#606366;letter-spacing:-1.100px;">63</span>
<span class="t m" style="left:514px;top:448px;font-size:16px;color:#606366;letter-spacing:-1.100px;">64</span>
<span class="t m" style="left:514px;top:476px;font-size:16px;color:#606366;letter-spacing:-1.100px;">65</span>
<span class="t m" style="left:514px;top:503px;font-size:16px;color:#606366;letter-spacing:-1.100px;">66</span>
<span class="t m" style="left:514px;top:531px;font-size:16px;color:#606366;letter-spacing:-1.100px;">67</span>
<span class="t m" style="left:514px;top:558px;font-size:16px;color:#606366;letter-spacing:-1.100px;">68</span>
<span class="t m" style="left:514px;top:586px;font-size:16px;color:#606366;letter-spacing:-1.100px;">69</span>
<span class="t m" style="left:514px;top:613px;font-size:16px;color:#606366;letter-spacing:-1.100px;">70</span>
<span class="t m" style="left:514px;top:641px;font-size:16px;color:#606366;letter-spacing:-1.100px;">71</span>
<span class="t m" style="left:514px;top:668px;font-size:16px;color:#606366;letter-spacing:-1.100px;">72</span>
<span class="t m" style="left:514px;top:696px;font-size:16px;color:#606366;letter-spacing:-1.100px;">73</span>
<span class="t m" style="left:514px;top:723px;font-size:16px;color:#606366;letter-spacing:-1.100px;">74</span>
<span class="t m" style="left:514px;top:751px;font-size:16px;color:#606366;letter-spacing:-1.100px;">75</span>
<span class="t" style="left:544.3px;top:143px;font-size:16.96px;color:#c4c6c8;">@</span>
<svg class="a" style="left:542.5px;top:198.6px;overflow:visible" width="20" height="20" viewBox="0 0 20 20"><circle cx="10" cy="10" r="8" fill="#c75450"/><path d="M8.6 4.600l3.4 3 6.2-5.5" fill="none" stroke="#313335" stroke-width="3.6"/><path d="M8.6 4.600l3.4 3 6.2-5.5" fill="none" stroke="#dcdcdc" stroke-width="1.7"/></svg>
<svg class="a" style="left:542.5px;top:418.6px;" width="20" height="20" viewBox="0 0 20 20"><path d="M6.27 4.680A6.5 6.5 0 1 0 14.98 5.82" fill="none" stroke="#afb1b3" stroke-width="1.3"/><path d="M11.8 2.800l5.6-0.5-1.8 4.400z" fill="#afb1b3"/><circle cx="10" cy="10" r="2.9" fill="#4aa657"/></svg>
<svg class="a" style="left:542.5px;top:473.6px;" width="20" height="20" viewBox="0 0 20 20"><path d="M6.27 4.680A6.5 6.5 0 1 0 14.98 5.82" fill="none" stroke="#afb1b3" stroke-width="1.3"/><path d="M11.8 2.800l5.6-0.5-1.8 4.400z" fill="#afb1b3"/><circle cx="10" cy="10" r="2.9" fill="#4aa657"/></svg>
<svg class="a" style="left:542.5px;top:528.6px;" width="20" height="20" viewBox="0 0 20 20"><path d="M6.27 4.680A6.5 6.5 0 1 0 14.98 5.82" fill="none" stroke="#afb1b3" stroke-width="1.3"/><path d="M11.8 2.800l5.6-0.5-1.8 4.400z" fill="#afb1b3"/><circle cx="10" cy="10" r="2.9" fill="#4aa657"/></svg>
<svg class="a" style="left:542.5px;top:583.6px;" width="20" height="20" viewBox="0 0 20 20"><path d="M6.27 4.680A6.5 6.5 0 1 0 14.98 5.82" fill="none" stroke="#afb1b3" stroke-width="1.3"/><path d="M11.8 2.800l5.6-0.5-1.8 4.400z" fill="#afb1b3"/><circle cx="10" cy="10" r="2.9" fill="#4aa657"/></svg>
<svg class="a" style="left:574px;top:149.2px;" width="12" height="15" viewBox="0 0 12 15"><path d="M0.6 0.6h10.8v8L6 14.4 0.6 8.6z" fill="#2b2b2b" stroke="#5c5e60" stroke-width="1.1"/><path d="M2.6 5h6.8" stroke="#5c5e60" stroke-width="0.9"/></svg>
<svg class="a" style="left:574px;top:204.2px;" width="12" height="15" viewBox="0 0 12 15"><path d="M0.6 0.6h10.8v8L6 14.4 0.6 8.6z" fill="#2b2b2b" stroke="#5c5e60" stroke-width="1.1"/><path d="M2.6 5h6.8" stroke="#5c5e60" stroke-width="0.9"/></svg>
<svg class="a" style="left:574px;top:314.2px;" width="12" height="15" viewBox="0 0 12 15"><path d="M0.6 0.6h10.8v8L6 14.4 0.6 8.6z" fill="#2b2b2b" stroke="#5c5e60" stroke-width="1.1"/><path d="M2.6 5h6.8" stroke="#5c5e60" stroke-width="0.9"/></svg>
<svg class="a" style="left:574px;top:424.2px;" width="12" height="15" viewBox="0 0 12 15"><path d="M0.6 0.6h10.8v8L6 14.4 0.6 8.6z" fill="#2b2b2b" stroke="#5c5e60" stroke-width="1.1"/><path d="M2.6 5h6.8" stroke="#5c5e60" stroke-width="0.9"/></svg>
<svg class="a" style="left:574px;top:254.8px;" width="12" height="15" viewBox="0 0 12 15"><path d="M0.6 14.400h10.8V6.400L6 0.6 0.6 6.400z" fill="#2b2b2b" stroke="#5c5e60" stroke-width="1.1"/><path d="M2.6 9.500h6.8" stroke="#5c5e60" stroke-width="1.1"/></svg>
<svg class="a" style="left:574px;top:474.8px;" width="12" height="15" viewBox="0 0 12 15"><path d="M0.6 14.400h10.8V6.400L6 0.6 0.6 6.400z" fill="#2b2b2b" stroke="#5c5e60" stroke-width="1.1"/><path d="M2.6 9.500h6.8" stroke="#5c5e60" stroke-width="1.1"/></svg>
<svg class="a" style="left:574px;top:529.8px;" width="12" height="15" viewBox="0 0 12 15"><path d="M0.6 14.400h10.8V6.400L6 0.6 0.6 6.400z" fill="#2b2b2b" stroke="#5c5e60" stroke-width="1.1"/><path d="M2.6 9.500h6.8" stroke="#5c5e60" stroke-width="1.1"/></svg>
<svg class="a" style="left:574px;top:584.8px;" width="12" height="15" viewBox="0 0 12 15"><path d="M0.6 14.400h10.8V6.400L6 0.6 0.6 6.400z" fill="#2b2b2b" stroke="#5c5e60" stroke-width="1.1"/><path d="M2.6 9.500h6.8" stroke="#5c5e60" stroke-width="1.1"/></svg>
<svg class="a" style="left:574px;top:639.8px;" width="12" height="15" viewBox="0 0 12 15"><path d="M0.6 14.400h10.8V6.400L6 0.6 0.6 6.400z" fill="#2b2b2b" stroke="#5c5e60" stroke-width="1.1"/><path d="M2.6 9.500h6.8" stroke="#5c5e60" stroke-width="1.1"/></svg>
<svg class="a" style="left:574px;top:749.8px;" width="12" height="15" viewBox="0 0 12 15"><path d="M0.6 14.400h10.8V6.400L6 0.6 0.6 6.400z" fill="#2b2b2b" stroke="#5c5e60" stroke-width="1.1"/><path d="M2.6 9.500h6.8" stroke="#5c5e60" stroke-width="1.1"/></svg>
<span class="t m" style="left:627.5px;top:146px;font-size:16.66px;color:#cc7832;">public</span>
<span class="t m" style="left:697.5px;top:146px;font-size:16.66px;color:#a9b7c6;">Boolean</span>
<span class="t m" style="left:777.5px;top:146px;font-size:16.66px;color:#ffc66d;">findWay</span>
<span class="t m" style="left:847.5px;top:146px;font-size:16.66px;color:#a9b7c6;">(</span>
<span class="t m" style="left:857.5px;top:146px;font-size:16.66px;color:#cc7832;">int</span>
<span class="t m" style="left:887.5px;top:146px;font-size:16.66px;color:#a9b7c6;">[][] map</span>
<span class="t m" style="left:967.5px;top:146px;font-size:16.66px;color:#cc7832;">,</span>
<span class="t m" style="left:977.5px;top:146px;font-size:16.66px;color:#cc7832;">int</span>
<span class="t m" style="left:1017.5px;top:146px;font-size:16.66px;color:#a9b7c6;">i</span>
<span class="t m" style="left:1027.5px;top:146px;font-size:16.66px;color:#cc7832;">,</span>
<span class="t m" style="left:1037.5px;top:146px;font-size:16.66px;color:#cc7832;">int</span>
<span class="t m" style="left:1077.5px;top:146px;font-size:16.66px;color:#a9b7c6;">j){</span>
<span class="t" style="left:1123px;top:145px;font-size:15.37px;color:#787878;letter-spacing:0.207px;">5 usages</span>
<span class="t m" style="left:1272.5px;top:146px;font-size:16.66px;color:#787878;font-style:italic;">map: int[8][]@500</span>
<span class="t m" style="left:1481px;top:146px;font-size:16.66px;color:#787878;font-style:italic;">i:</span>
<span class="t m" style="left:1510px;top:146px;font-size:16.66px;color:#e0962a;font-style:italic;">1</span>
<span class="t m" style="left:1558px;top:146px;font-size:16.66px;color:#787878;font-style:italic;">j:</span>
<span class="t m" style="left:1587px;top:146px;font-size:16.66px;color:#e0962a;font-style:italic;">2</span>
<span class="t m" style="left:667.5px;top:173px;font-size:16.66px;color:#808080;">//</span>
<span class="t m" style="left:687.5px;top:173px;font-size:16px;color:#808080;">设定最终找到坐标是</span>
<span class="t m" style="left:831.5px;top:173px;font-size:16.66px;color:#808080;">map[6][5]</span>
<span class="t m" style="left:931.5px;top:173px;font-size:16px;color:#808080;">就不再找了</span>
<span class="t m" style="left:667.5px;top:201px;font-size:16.66px;color:#cc7832;">if</span>
<span class="t m" style="left:697.5px;top:201px;font-size:16.66px;color:#a9b7c6;">(map[</span>
<span class="t m" style="left:747.5px;top:201px;font-size:16.66px;color:#6897bb;">6</span>
<span class="t m" style="left:757.5px;top:201px;font-size:16.66px;color:#a9b7c6;">][</span>
<span class="t m" style="left:777.5px;top:201px;font-size:16.66px;color:#6897bb;">5</span>
<span class="t m" style="left:787.5px;top:201px;font-size:16.66px;color:#a9b7c6;">] ==</span>
<span class="t m" style="left:837.5px;top:201px;font-size:16.66px;color:#6897bb;">2</span>
<span class="t m" style="left:847.5px;top:201px;font-size:16.66px;color:#a9b7c6;">){</span>
<span class="t m" style="left:707.5px;top:228px;font-size:16.66px;color:#cc7832;">return true;</span>
<span class="t m" style="left:667.5px;top:256px;font-size:16.66px;color:#a9b7c6;">}</span>
<span class="t m" style="left:677.5px;top:256px;font-size:16.66px;color:#cc7832;">else</span>
<span class="t m" style="left:727.5px;top:256px;font-size:16.66px;color:#a9b7c6;">{</span>
<span class="t m" style="left:707.5px;top:283px;font-size:16.66px;color:#808080;">//</span>
<span class="t m" style="left:727.5px;top:283px;font-size:16px;color:#808080;">如果当前位置是</span>
<span class="t m" style="left:839.5px;top:283px;font-size:16.66px;color:#808080;">0</span>
<span class="t m" style="left:859.5px;top:283px;font-size:16px;color:#808080;">代表可以走</span>
<span class="t m" style="left:707.5px;top:311px;font-size:16.66px;color:#cc7832;">if</span>
<span class="t m" style="left:737.5px;top:311px;font-size:16.66px;color:#a9b7c6;">(map[i][j] ==</span>
<span class="t m" style="left:877.5px;top:311px;font-size:16.66px;color:#6897bb;">0</span>
<span class="t m" style="left:887.5px;top:311px;font-size:16.66px;color:#a9b7c6;">){</span>
<span class="t m" style="left:747.5px;top:338px;font-size:16.66px;color:#808080;">//</span>
<span class="t m" style="left:767.5px;top:338px;font-size:16px;color:#808080;">先把该点设置为</span>
<span class="t m" style="left:879.5px;top:338px;font-size:16.66px;color:#808080;">2</span>
<span class="t m" style="left:899.5px;top:338px;font-size:16px;color:#808080;">表示可以走</span>
<span class="t m" style="left:747.5px;top:366px;font-size:16.66px;color:#a9b7c6;">map[i][j] =</span>
<span class="t m" style="left:867.5px;top:366px;font-size:16.66px;color:#6897bb;">2</span>
<span class="t m" style="left:877.5px;top:366px;font-size:16.66px;color:#cc7832;">;</span>
<span class="t m" style="left:912px;top:366px;font-size:16.66px;color:#5a7fab;font-style:italic;">map: int[8][]@500</span>
<span class="t m" style="left:1120.5px;top:366px;font-size:16.66px;color:#5a7fab;font-style:italic;">i: 1</span>
<span class="t m" style="left:1197px;top:366px;font-size:16.66px;color:#5a7fab;font-style:italic;">j:</span>
<span class="t m" style="left:1227px;top:366px;font-size:16.66px;color:#e0962a;font-style:italic;">2</span>
<span class="t m" style="left:747.5px;top:393px;font-size:16.66px;color:#808080;">//</span>
<span class="t m" style="left:767.5px;top:393px;font-size:16px;color:#808080;">以上</span>
<span class="t m" style="left:799.5px;top:393px;font-size:16.66px;color:#808080;">-&gt;</span>
<span class="t m" style="left:819.5px;top:393px;font-size:16px;color:#808080;">右</span>
<span class="t m" style="left:835.5px;top:393px;font-size:16.66px;color:#808080;">-&gt;</span>
<span class="t m" style="left:855.5px;top:393px;font-size:16px;color:#808080;">下</span>
<span class="t m" style="left:871.5px;top:393px;font-size:16.66px;color:#808080;">-&gt;</span>
<span class="t m" style="left:891.5px;top:393px;font-size:16px;color:#808080;">左的策略往其他四个方向走</span>
<span class="t m" style="left:747.5px;top:421px;font-size:16.66px;color:#cc7832;">if</span>
<span class="t m" style="left:777.5px;top:421px;font-size:16.66px;color:#a9b7c6;">(findWay(map</span>
<span class="t m" style="left:897.5px;top:421px;font-size:16.66px;color:#cc7832;">,</span>
<div class="a" style="left:910.5px;top:417.2px;width:19px;height:22px;border-radius:4px;background:#353637"></div>
<span class="t" style="left:915.7px;top:420px;font-size:13.78px;color:#7d7d7d;letter-spacing:1.055px;">i:</span>
<span class="t m" style="left:932.5px;top:421px;font-size:16.66px;color:#a9b7c6;">i-</span>
<span class="t m" style="left:952.5px;top:421px;font-size:16.66px;color:#6897bb;">1</span>
<span class="t m" style="left:962.5px;top:421px;font-size:16.66px;color:#cc7832;">,</span>
<span class="t m" style="left:972.5px;top:421px;font-size:16.66px;color:#a9b7c6;">j)){</span>
<span class="t m" style="left:787.5px;top:448px;font-size:16.66px;color:#cc7832;">return true;</span>
<span class="t m" style="left:747.5px;top:476px;font-size:16.66px;color:#a9b7c6;">}</span>
<span class="t m" style="left:757.5px;top:476px;font-size:16.66px;color:#cc7832;">else if</span>
<span class="t m" style="left:837.5px;top:476px;font-size:16.66px;color:#a9b7c6;">(findWay(map</span>
<span class="t m" style="left:957.5px;top:476px;font-size:16.66px;color:#cc7832;">,</span>
<span class="t m" style="left:967.5px;top:476px;font-size:16.66px;color:#a9b7c6;">i</span>
<span class="t m" style="left:977.5px;top:476px;font-size:16.66px;color:#cc7832;">,</span>
<div class="a" style="left:990.5px;top:472.2px;width:19px;height:22px;border-radius:4px;background:#353637"></div>
<span class="t" style="left:995.7px;top:475px;font-size:13.78px;color:#7d7d7d;letter-spacing:1.055px;">j:</span>
<span class="t m" style="left:1012.5px;top:476px;font-size:16.66px;color:#a9b7c6;">j+</span>
<span class="t m" style="left:1032.5px;top:476px;font-size:16.66px;color:#6897bb;">1</span>
<span class="t m" style="left:1042.5px;top:476px;font-size:16.66px;color:#a9b7c6;">)){</span>
<span class="t m" style="left:787.5px;top:503px;font-size:16.66px;color:#cc7832;">return true;</span>
<span class="t m" style="left:747.5px;top:531px;font-size:16.66px;color:#a9b7c6;">}</span>
<span class="t m" style="left:757.5px;top:531px;font-size:16.66px;color:#cc7832;">else if</span>
<span class="t m" style="left:837.5px;top:531px;font-size:16.66px;color:#a9b7c6;">(findWay(map</span>
<span class="t m" style="left:957.5px;top:531px;font-size:16.66px;color:#cc7832;">,</span>
<div class="a" style="left:970.5px;top:527.2px;width:19px;height:22px;border-radius:4px;background:#353637"></div>
<span class="t" style="left:975.7px;top:530px;font-size:13.78px;color:#7d7d7d;letter-spacing:1.055px;">i:</span>
<span class="t m" style="left:992.5px;top:531px;font-size:16.66px;color:#a9b7c6;">i+</span>
<span class="t m" style="left:1012.5px;top:531px;font-size:16.66px;color:#6897bb;">1</span>
<span class="t m" style="left:1022.5px;top:531px;font-size:16.66px;color:#cc7832;">,</span>
<span class="t m" style="left:1032.5px;top:531px;font-size:16.66px;color:#a9b7c6;">j)){</span>
<span class="t m" style="left:787.5px;top:558px;font-size:16.66px;color:#cc7832;">return true;</span>
<span class="t m" style="left:747.5px;top:586px;font-size:16.66px;color:#a9b7c6;">}</span>
<span class="t m" style="left:757.5px;top:586px;font-size:16.66px;color:#cc7832;">else if</span>
<span class="t m" style="left:837.5px;top:586px;font-size:16.66px;color:#a9b7c6;">(findWay(map</span>
<span class="t m" style="left:957.5px;top:586px;font-size:16.66px;color:#cc7832;">,</span>
<span class="t m" style="left:967.5px;top:586px;font-size:16.66px;color:#a9b7c6;">i</span>
<span class="t m" style="left:977.5px;top:586px;font-size:16.66px;color:#cc7832;">,</span>
<div class="a" style="left:990.5px;top:582.2px;width:19px;height:22px;border-radius:4px;background:#353637"></div>
<span class="t" style="left:995.7px;top:585px;font-size:13.78px;color:#7d7d7d;letter-spacing:1.055px;">j:</span>
<span class="t m" style="left:1012.5px;top:586px;font-size:16.66px;color:#a9b7c6;">j-</span>
<span class="t m" style="left:1032.5px;top:586px;font-size:16.66px;color:#6897bb;">1</span>
<span class="t m" style="left:1042.5px;top:586px;font-size:16.66px;color:#a9b7c6;">)){</span>
<span class="t m" style="left:787.5px;top:613px;font-size:16.66px;color:#cc7832;">return true;</span>
<span class="t m" style="left:747.5px;top:641px;font-size:16.66px;color:#a9b7c6;">}</span>
<span class="t m" style="left:757.5px;top:641px;font-size:16.66px;color:#cc7832;">else</span>
<span class="t m" style="left:807.5px;top:641px;font-size:16.66px;color:#a9b7c6;">{</span>
<span class="t m" style="left:787.5px;top:668px;font-size:16.66px;color:#808080;">//</span>
<span class="t m" style="left:807.5px;top:668px;font-size:16px;color:#808080;">如果四个位置都走不通，就将该位置置为</span>
<span class="t m" style="left:1095.5px;top:668px;font-size:16.66px;color:#808080;">3</span>
<span class="t m" style="left:787.5px;top:696px;font-size:16.66px;color:#a9b7c6;">map[i][j] =</span>
<span class="t m" style="left:907.5px;top:696px;font-size:16.66px;color:#6897bb;">3</span>
<span class="t m" style="left:917.5px;top:696px;font-size:16.66px;color:#cc7832;">;</span>
<span class="t m" style="left:787.5px;top:723px;font-size:16.66px;color:#cc7832;">return false;</span>
<span class="t m" style="left:747.5px;top:751px;font-size:16.66px;color:#a9b7c6;">}</span>
<div class="a" style="left:1875px;top:308px;width:17px;height:2.5px;background:#be9117;"></div>
<div class="a" style="left:1875px;top:337px;width:17px;height:2.5px;background:#be9117;"></div>
<div class="a" style="left:1875px;top:389px;width:17px;height:2.5px;background:#be9117;"></div>
<div class="a" style="left:1875px;top:418px;width:17px;height:2.5px;background:#be9117;"></div>
<div class="a" style="left:1875px;top:535px;width:17px;height:2.5px;background:#6e4237;"></div>
<div class="a" style="left:1881px;top:513px;width:10.5px;height:177px;background:rgba(255,255,255,0.16);"></div>
</main>
<footer class="a" id="debug-and-status" style="left:0;top:0">
<div class="a" style="left:1892px;top:72px;width:28px;height:895px;background:#3c3f41;"></div>
<div class="a" style="left:1892px;top:72px;width:1px;height:895px;background:#323232;"></div>
<svg class="a" style="left:1898px;top:85px;" width="18" height="18" viewBox="0 0 18 18"><path d="M9 2.2c3 0 4.6 2.2 4.6 5v3.6l2 3.2H2.4l2-3.2V7.2c0-2.8 1.6-5 4.6-5z" fill="#afb1b3"/><rect x="6.8" y="15" width="4.4" height="1.6" fill="#afb1b3"/><circle cx="14" cy="4.3" r="3" fill="#db5860"/></svg>
<span class="t" style="left:0px;top:0px;font-size:13.4px;letter-spacing:0.389px;transform-origin:0 0;transform:translate(1914.4px,108.5px) rotate(90deg);left:0;top:0;">Notifications</span>
<svg class="a" style="left:1898px;top:215px;" width="17" height="17" viewBox="0 0 17 17"><path d="M8.5 8.500a2 2 0 1 1 2.5 2 4.2 4.2 0 1 1 2-6.5 6.4 6.4 0 1 0 1 6" fill="none" stroke="#afb1b3" stroke-width="1.4"/></svg>
<span class="t" style="left:0px;top:0px;font-size:13.4px;letter-spacing:0.294px;transform-origin:0 0;transform:translate(1914.4px,235px) rotate(90deg);left:0;top:0;">AI Assistant</span>
<svg class="a" style="left:1898px;top:335px;" width="17" height="17" viewBox="0 0 17 17"><ellipse cx="8.5" cy="3.5" rx="6.5" ry="2.4" fill="#afb1b3"/><path d="M2 5.500c0 3 13 3 13 0v2c0 3-13 3-13 0zM2 9c0 3 13 3 13 0v2c0 3-13 3-13 0zM2 12.500c0 3 13 3 13 0v1.500c0 3-13 3-13 0z" fill="#afb1b3"/></svg>
<span class="t" style="left:0px;top:0px;font-size:13.4px;letter-spacing:-0.104px;transform-origin:0 0;transform:translate(1914.4px,356.5px) rotate(90deg);left:0;top:0;">Database</span>
<svg class="a" style="left:1898px;top:440px;" width="17" height="17" viewBox="0 0 17 17"><circle cx="8.5" cy="3.5" r="3" fill="#afb1b3"/><circle cx="3.5" cy="13" r="3" fill="#afb1b3"/><circle cx="13.5" cy="13" r="3" fill="#afb1b3"/><path d="M8.5 3.500L3.5 13M8.5 3.500l5 9.5" stroke="#afb1b3" stroke-width="1.3"/></svg>
<span class="t" style="left:0px;top:0px;font-size:13.4px;letter-spacing:0.049px;transform-origin:0 0;transform:translate(1914.4px,461.5px) rotate(90deg);left:0;top:0;">Endpoints</span>
<svg class="a" style="left:1898px;top:547px;" width="18" height="18" viewBox="0 0 16 16"><text x="0.2" y="13.4" font-family="Liberation Sans,sans-serif" font-size="17" font-weight="700" font-style="italic" fill="#afb1b3" stroke="#afb1b3" stroke-width="0.5" textLength="15" lengthAdjust="spacingAndGlyphs">m</text></svg>
<span class="t" style="left:0px;top:0px;font-size:13.4px;letter-spacing:0.259px;transform-origin:0 0;transform:translate(1914.4px,570.5px) rotate(90deg);left:0;top:0;">Maven</span>
<svg class="a" style="left:1899px;top:874px;" width="15" height="16" viewBox="0 0 15 16"><path d="M1 2.500L7.5 1 14 2.500V8c0 4-3 6-6.5 7.500C4 14 1 12 1 8z" fill="#afb1b3"/><path d="M7.5 3v10.300c2.6-1.3 4.3-2.8 4.3-5.500V4z" fill="#3c3f41"/></svg>
<span class="t" style="left:0px;top:0px;font-size:13.4px;letter-spacing:-0.195px;transform-origin:0 0;transform:translate(1914.4px,897px) rotate(90deg);left:0;top:0;">Coverage</span>
<div class="a" style="left:27px;top:777px;width:1865px;height:1px;background:#323232;"></div>
<div class="a" style="left:27px;top:778px;width:1865px;height:33px;background:#3c4857;"></div>
<div class="a" style="left:27px;top:811px;width:1865px;height:1px;background:#313335;"></div>
<div class="a" style="left:27px;top:811px;width:1865px;height:156px;background:#3c3f41;"></div>
<span class="t" style="left:35px;top:786px;font-size:15.9px;letter-spacing:0.375px;">Debug:</span>
<svg class="a" style="left:111px;top:786px;" width="20" height="20" viewBox="0 0 16 16"><rect x="3.5" y="1.5" width="11" height="9" fill="none" stroke="#7f8b91" stroke-width="1"/><rect x="1.5" y="3.5" width="11" height="9.5" fill="#3c8aa8" stroke="#7f8b91" stroke-width="1.4"/><rect x="1" y="3" width="12" height="2.2" fill="#7f8b91"/><circle cx="13" cy="13.2" r="2" fill="#2edb2e"/></svg>
<span class="t" style="left:136px;top:786px;font-size:15.9px;letter-spacing:0.896px;">migong</span>
<svg class="a" style="left:198px;top:786px;" width="20" height="20" viewBox="0 0 16 16"><path d="M4.6 4.6l6.8 6.8M11.4 4.6l-6.8 6.8" stroke="#7f8a96" stroke-width="1.1"/></svg>
<div class="a" style="left:97px;top:808px;width:129px;height:4px;background:#4a88c7;"></div>
<svg class="a" style="left:1834px;top:785px;" width="20" height="20" viewBox="0 0 16 16"><path fill-rule="evenodd" fill="#afb1b3" stroke="#afb1b3" stroke-width="0.5" stroke-linejoin="round" d="M9.70 3.57 L9.56 1.74 L6.44 1.74 L6.30 3.57 L5.01 4.31 L3.36 3.52 L1.80 6.22 L3.31 7.26 L3.31 8.74 L1.80 9.78 L3.36 12.48 L5.01 11.69 L6.30 12.43 L6.44 14.26 L9.56 14.26 L9.70 12.43 L10.99 11.69 L12.64 12.48 L14.20 9.78 L12.69 8.74 L12.69 7.26 L14.20 6.22 L12.64 3.52 L10.99 4.31z M5.40 8a2.6 2.6 0 1 0 5.2 0a2.6 2.6 0 1 0 -5.2 0z"/></svg>
<svg class="a" style="left:1866px;top:785px;" width="20" height="20" viewBox="0 0 16 16"><path d="M1.9 8h12.3" stroke="#afb1b3" stroke-width="1.7"/></svg>
<div class="a" style="left:62px;top:811px;width:1px;height:156px;background:#323232;"></div>
<svg class="a" style="left:35px;top:820px;" width="20" height="20" viewBox="0 0 20 20"><path d="M6.15 16.300A6.3 6.3 0 0 1 11.7 5.4" fill="none" stroke="#499c54" stroke-width="2.7"/><path d="M11.7 1.200l7.6 5-7.6 5z" fill="#499c54"/><rect x="10.6" y="11.8" width="7.6" height="7.6" fill="#3c3f41"/><rect x="11.2" y="12.4" width="6.6" height="6.6" fill="#afb1b3"/></svg>
<svg class="a" style="left:35px;top:853px;" width="20" height="20" viewBox="0 0 20 20"><path d="M2.2 16.600L11.5 7.6" stroke="#afb1b3" stroke-width="3.4"/><circle cx="14" cy="6" r="4.9" fill="#afb1b3"/><path d="M14 6.400l2.3-6.4 5 4.600z" fill="#3c3f41"/><path d="M13.4 4.200l3-3.4 3.2 3.2-3.4 3z" fill="#3c3f41"/></svg>
<div class="a" style="left:33px;top:883px;width:24px;height:1px;background:#515355;"></div>
<svg class="a" style="left:36px;top:894px;" width="20" height="18" viewBox="0 0 20 18"><rect x="2" y="2" width="3.6" height="14.5" fill="#499c54"/><path d="M8 2v14.500L18 9.250z" fill="#499c54"/></svg>
<svg class="a" style="left:41px;top:950px;" width="11" height="9" viewBox="0 0 11 9"><path d="M1.2 1.200l3 3.3-3 3.300M6.2 1.200l3 3.3-3 3.3" fill="none" stroke="#afb1b3" stroke-width="1.2"/></svg>
<div class="a" style="left:63px;top:848px;width:1829px;height:1px;background:#323232;"></div>
<span class="t" style="left:80px;top:821px;font-size:13.99px;letter-spacing:0.010px;">Debugger</span>
<div class="a" style="left:64px;top:846px;width:93px;height:3px;background:#4a88c7;"></div>
<svg class="a" style="left:164px;top:830px;" width="11" height="11" viewBox="0 0 11 11"><circle cx="5.5" cy="5.5" r="5" fill="#f0a732"/><path d="M5.5 2.200v5M3.2 5.300l2.3 2.3 2.3-2.3" fill="none" stroke="#3c3f41" stroke-width="1.1"/></svg>
<span class="t" style="left:173.5px;top:821px;font-size:13.99px;letter-spacing:-0.330px;">Console</span>
<svg class="a" style="left:244px;top:821px;" width="20" height="20" viewBox="0 0 20 20"><rect x="2.4" y="2.8" width="15.2" height="2.2" fill="#afb1b3"/><rect x="2.4" y="8.3" width="15.2" height="3" fill="#389fd6"/><rect x="2.4" y="14.1" width="15.2" height="2.3" fill="#afb1b3"/></svg>
<div class="a" style="left:274px;top:818px;width:1px;height:25px;background:#515355;"></div>
<svg class="a" style="left:285px;top:821px;" width="20" height="20" viewBox="0 0 20 20"><path d="M2.8 9.600L8.5 3.3 13.8 8.8" fill="none" stroke="#389fd6" stroke-width="2.2"/><path d="M10.2 11.400l8 .4-.2-7.500z" fill="#389fd6"/><rect x="2.2" y="13.8" width="15.8" height="2.8" fill="#afb1b3"/></svg>
<svg class="a" style="left:318px;top:821px;" width="20" height="20" viewBox="0 0 20 20"><rect x="8.9" y="0.2" width="2.3" height="7" fill="#389fd6"/><path d="M4.1 6h11.800L10 12.300z" fill="#389fd6"/><rect x="2.4" y="13.8" width="15.5" height="2.8" fill="#afb1b3"/></svg>
<svg class="a" style="left:350px;top:821px;" width="20" height="20" viewBox="0 0 20 20"><rect x="8.8" y="7" width="2.3" height="5.9" fill="#389fd6"/><path d="M4.2 7.200h11.500L9.95 0.900z" fill="#389fd6"/><rect x="2.2" y="13.8" width="15.5" height="2.8" fill="#afb1b3"/></svg>
<svg class="a" style="left:383px;top:821px;" width="20" height="20" viewBox="0 0 20 20"><path d="M2.2 1.500L9.6 8.9" stroke="#389fd6" stroke-width="2.3"/><path d="M11.3 3.200l.6 8-8.6-.6z" fill="#389fd6"/><path d="M12.3 8.300c2 0 3.2.5 3.2 1.5 0-1 1.2-1.5 3.2-1.500M12.3 17.700c2 0 3.2-.5 3.2-1.5 0 1 1.2 1.5 3.2 1.500M15.5 9.500v7" fill="none" stroke="#afb1b3" stroke-width="1.1"/></svg>
<div class="a" style="left:413px;top:818px;width:1px;height:25px;background:#515355;"></div>
<svg class="a" style="left:424px;top:821px;" width="20" height="20" viewBox="0 0 20 20"><rect x="2.4" y="1" width="15.2" height="16" fill="#afb1b3"/><rect x="4.4" y="3.2" width="11.2" height="2.3" fill="#3c3f41"/><rect x="4.6" y="7.8" width="2.7" height="2.7" fill="#3c3f41"/><rect x="4.6" y="11.9" width="2.7" height="2.7" fill="#3c3f41"/><rect x="8.65" y="7.8" width="2.7" height="2.7" fill="#3c3f41"/><rect x="8.65" y="11.9" width="2.7" height="2.7" fill="#3c3f41"/><rect x="12.7" y="7.8" width="2.7" height="2.7" fill="#3c3f41"/><rect x="12.7" y="11.9" width="2.7" height="2.7" fill="#3c3f41"/></svg>
<svg class="a" style="left:456px;top:821px;" width="20" height="20" viewBox="0 0 20 20"><path d="M2.4 5h5.500M12 5h5.600M2.4 9.500h4.500M11 9.500h6.600M2.4 14h5.500M10 14h7.600M12 5c-2.5 0-2.5 9-5.5 9" fill="none" stroke="#5e6163" stroke-width="1.5"/></svg>
<svg class="a" style="left:1869px;top:822px;" width="20" height="20" viewBox="0 0 20 20"><rect x="1" y="2" width="8" height="6" fill="#afb1b3"/><rect x="10.5" y="2" width="8" height="6" fill="#afb1b3"/><rect x="1" y="9.5" width="17.5" height="6" fill="#afb1b3"/><path d="M13 17h6l-3 3z" fill="#afb1b3"/></svg>
<span class="t" style="left:80px;top:858px;font-size:13.99px;letter-spacing:-0.484px;">Frames</span>
<div class="a" style="left:64px;top:882px;width:77px;height:2px;background:#747a80;"></div>
<span class="t" style="left:156px;top:858px;font-size:13.99px;letter-spacing:-0.330px;">Threads</span>
<div class="a" style="left:63px;top:883px;width:339px;height:1px;background:#323232;"></div>
<div class="a" style="left:402px;top:849px;width:2px;height:118px;background:#323232;"></div>
<svg class="a" style="left:75px;top:891px;" width="20" height="19" viewBox="0 0 20 19"><path d="M2.5 10l4.5 5L17.5 3" fill="none" stroke="#d9632c" stroke-width="3"/></svg>
<span class="t" style="left:99.5px;top:893px;font-size:15.9px;letter-spacing:0.024px;">"main"@1 in g...ain": RUNNING</span>
<div class="a" style="left:339px;top:887.5px;width:27.500px;height:27.500px;border-radius:4px;background:#5c6164"></div>
<svg class="a" style="left:344px;top:893px;" width="18" height="17" viewBox="0 0 18 17"><path d="M1.5 1.500h15l-5.7 6.500v7.500h-3.600V8z" fill="#e6e6e6"/></svg>
<svg class="a" style="left:378px;top:897px;" width="12" height="9" viewBox="0 0 12 9"><path d="M1 1.500h10L6 7.500z" fill="#afb1b3"/></svg>
<div class="a" style="left:64px;top:920px;width:338px;height:18.5px;background:#0d293e;"></div>
<div class="a" style="left:64px;top:927.5px;width:299px;height:11px;background:#2f4a63;"></div>
<div class="a" style="left:64px;top:920px;width:338px;height:18.500px;overflow:hidden">
<svg class="a" style="left:10px;top:7px;" width="18" height="16" viewBox="0 0 18 16"><path d="M6 1.500L2 5.500l4 4" fill="none" stroke="#c4c6c8" stroke-width="1.4"/><path d="M2 5.500h8.500a4.5 4.5 0 0 1 0 9H7" fill="none" stroke="#c4c6c8" stroke-width="1.4"/></svg>
<span class="t" style="left:32.5px;top:4px;font-size:15.9px;color:#dcdcdc;letter-spacing:-0.089px;">findWay:61, T</span>
<span class="t" style="left:136.5px;top:4px;font-size:15.9px;color:#dcdcdc;font-style:italic;letter-spacing:0.286px;">(com.atguigu.recursion)</span>
<span class="t" style="left:312.5px;top:4px;font-size:15.9px;color:#ffffff;font-weight:700;letter-spacing:0.193px;">[2]</span>
</div>
<div class="a" style="left:63px;top:938.5px;width:339px;height:1px;background:#323232;"></div>
<span class="t" style="left:74px;top:945px;font-size:13.78px;color:#787878;letter-spacing:0.070px;">Switch frames from anywhere in the IDE with Ct..</span>
<svg class="a" style="left:378px;top:945px;" width="20" height="20" viewBox="0 0 16 16"><path d="M4.6 4.6l6.8 6.8M11.4 4.6l-6.8 6.8" stroke="#6c6e70" stroke-width="1.1"/></svg>
<div class="a" style="left:404px;top:849px;width:1217px;height:35px;background:#45494a;"></div>
<div class="a" style="left:404px;top:883.5px;width:1217px;height:1px;background:#323232;"></div>
<span class="t m" style="left:413px;top:858px;color:#787878;">Evaluate expression (Enter) or add a watch (Ctrl+Shift+Enter)</span>
<svg class="a" style="left:1563px;top:859px;" width="20" height="18" viewBox="0 0 20 18"><path d="M8 1.500v12M2 7.500h12" stroke="#5e6163" stroke-width="1.6"/><circle cx="10.5" cy="14.5" r="2" fill="none" stroke="#5e6163" stroke-width="1"/><circle cx="15.5" cy="14.5" r="2" fill="none" stroke="#5e6163" stroke-width="1"/></svg>
<svg class="a" style="left:1597px;top:863px;" width="12" height="8" viewBox="0 0 12 8"><path d="M1 1h10L6 6.500z" fill="#afb1b3"/></svg>
<div class="a" style="left:1609px;top:886px;width:10px;height:32px;background:#595b5d;"></div>
<svg class="a" style="left:408.5px;top:888px;" width="20" height="20" viewBox="0 0 16 16"><path d="M5.6 3.4l3.8 3.8-3.8 3.8" fill="none" stroke="#afb1b3" stroke-width="1.15"/></svg>
<svg class="a" style="left:437px;top:890px;" width="14" height="15" viewBox="0 0 14 15"><rect x="0.5" y="1" width="13" height="3.3" fill="#c9a04c"/><rect x="0.5" y="5.8" width="13" height="3.3" fill="#c9a04c"/><rect x="0.5" y="10.6" width="13" height="3.3" fill="#c9a04c"/></svg>
<span class="t" style="left:458px;top:889px;font-size:15.9px;color:#f26b70;letter-spacing:0.191px;">this</span>
<span class="t" style="left:489px;top:889px;font-size:15.9px;">=</span>
<span class="t" style="left:503px;top:889px;font-size:15.9px;color:#8a8a8a;letter-spacing:-0.210px;">{T@502}</span>
<svg class="a" style="left:408.5px;top:913px;" width="20" height="20" viewBox="0 0 16 16"><path d="M5.6 3.4l3.8 3.8-3.8 3.8" fill="none" stroke="#afb1b3" stroke-width="1.15"/></svg>
<svg class="a" style="left:435px;top:914px;" width="18" height="18" viewBox="0 0 18 18"><circle cx="9" cy="9" r="8.8" fill="#c9963f"/><path d="M6.8 14.500V6.200M6.8 9a2.5 2.7 0 1 1 0 0.1" fill="none" stroke="#3c3f41" stroke-width="1.4" opacity=".8"/></svg>
<span class="t" style="left:458px;top:914px;font-size:15.9px;color:#f26b70;letter-spacing:0.359px;">map</span>
<span class="t" style="left:494.5px;top:914px;font-size:15.9px;">=</span>
<span class="t" style="left:509.5px;top:914px;font-size:15.9px;color:#8a8a8a;letter-spacing:0.211px;">{int[8][]@500}</span>
<svg class="a" style="left:435px;top:939px;" width="18" height="18" viewBox="0 0 18 18"><circle cx="9" cy="9" r="8.8" fill="#c9963f"/><path d="M6.8 14.500V6.200M6.8 9a2.5 2.7 0 1 1 0 0.1" fill="none" stroke="#3c3f41" stroke-width="1.4" opacity=".8"/></svg>
<span class="t" style="left:458px;top:939px;font-size:15.9px;color:#f26b70;">i</span>
<span class="t" style="left:467px;top:939px;font-size:15.9px;">=</span>
<span class="t" style="left:481px;top:939px;font-size:15.9px;color:#dcdcdc;">1</span>
<div class="a" style="left:435px;top:964px;width:18px;height:3px;overflow:hidden"><div style="width:18px;height:18px;border-radius:9px;background:#c9963f"></div></div>
<div class="a" style="left:1620px;top:849px;width:2px;height:118px;background:#323232;"></div>
<span class="t" style="left:1638.5px;top:858px;font-size:13.99px;letter-spacing:0.414px;">Memory</span>
<div class="a" style="left:1622px;top:882px;width:85px;height:2px;background:#747a80;"></div>
<div class="a" style="left:1622px;top:883.5px;width:270px;height:1px;background:#323232;"></div>
<span class="t" style="left:1722.5px;top:858px;font-size:13.99px;letter-spacing:-0.053px;">Overhead</span>
<div class="a" style="left:1626px;top:888px;width:229px;height:28px;border:1px solid #646464;border-radius:4px;background:#45494a"></div>
<svg class="a" style="left:1635px;top:894px;" width="18" height="18" viewBox="0 0 18 18"><circle cx="7.5" cy="7.5" r="5.5" fill="none" stroke="#afb1b3" stroke-width="1.3"/><path d="M11.5 11.500l4.5 4.5" stroke="#afb1b3" stroke-width="1.3"/></svg>
<svg class="a" style="left:1866px;top:893px;" width="20" height="20" viewBox="0 0 16 16"><path fill-rule="evenodd" fill="#afb1b3" stroke="#afb1b3" stroke-width="0.5" stroke-linejoin="round" d="M9.70 3.57 L9.56 1.74 L6.44 1.74 L6.30 3.57 L5.01 4.31 L3.36 3.52 L1.80 6.22 L3.31 7.26 L3.31 8.74 L1.80 9.78 L3.36 12.48 L5.01 11.69 L6.30 12.43 L6.44 14.26 L9.56 14.26 L9.70 12.43 L10.99 11.69 L12.64 12.48 L14.20 9.78 L12.69 8.74 L12.69 7.26 L14.20 6.22 L12.64 3.52 L10.99 4.31z M5.40 8a2.6 2.6 0 1 0 5.2 0a2.6 2.6 0 1 0 -5.2 0z"/></svg>
<svg class="a" style="left:1881px;top:909px;" width="7" height="5" viewBox="0 0 7 5"><path d="M0 0.500h7L3.5 4.500z" fill="#afb1b3"/></svg>
<div class="a" style="left:1622px;top:921px;width:270px;height:29.5px;background:#414547;"></div>
<div class="a" style="left:1622px;top:950.5px;width:270px;height:1px;background:#323232;"></div>
<div class="a" style="left:1692.5px;top:921px;width:1.5px;height:29px;background:#323232;"></div>
<div class="a" style="left:1792.5px;top:921px;width:1.5px;height:29px;background:#323232;"></div>
<span class="t" style="left:1632.5px;top:928px;font-size:15.9px;letter-spacing:-0.647px;">Class</span>
<span class="t" style="left:1702.5px;top:928px;font-size:15.9px;letter-spacing:0.519px;">Count</span>
<span class="t" style="left:1802.5px;top:928px;font-size:15.9px;letter-spacing:0.859px;">Diff</span>
<svg class="a" style="left:1837px;top:933px;" width="12" height="8" viewBox="0 0 12 8"><path d="M0.5 1h10.500L5.75 6.800z" fill="#afb1b3"/></svg>
<div class="a" style="left:1622px;top:952px;width:270px;height:15px;overflow:hidden">
<span class="t" style="left:18px;top:2px;font-size:15.9px;color:#8a8a8a;letter-spacing:-0.181px;">No classes loaded.</span>
<span class="t" style="left:156.5px;top:2px;font-size:15.9px;color:#589df6;letter-spacing:-0.230px;">Load classes</span>
</div>
<div class="a" style="left:0px;top:966px;width:1920px;height:29px;background:#3c3f41;"></div>
<div class="a" style="left:0px;top:966px;width:1920px;height:1px;background:#323232;"></div>
<div class="a" style="left:241px;top:967px;width:88px;height:27px;background:#2d2f30;"></div>
<div class="a" style="left:0px;top:994px;width:1920px;height:1px;background:#4b4d4f;"></div>
<svg class="a" style="left:42px;top:974px;" width="14" height="16" viewBox="0 0 14 16"><circle cx="3.5" cy="2.8" r="2.2" fill="#afb1b3"/><circle cx="3.5" cy="13.2" r="2.2" fill="#afb1b3"/><circle cx="10.5" cy="5.5" r="2.2" fill="#afb1b3"/><path d="M3.5 3v10M10.5 6c0 3.5-7 2.5-7 6" fill="none" stroke="#afb1b3" stroke-width="1.9"/></svg>
<span class="t" style="left:62.5px;top:973px;font-size:13.89px;letter-spacing:0.142px;">Version Control</span>
<svg class="a" style="left:186px;top:975px;" width="12" height="14" viewBox="0 0 12 14"><path d="M1 1v12l10-6z" fill="#afb1b3"/></svg>
<span class="t" style="left:205.8px;top:973px;font-size:13.89px;letter-spacing:-0.323px;">Run</span>
<svg class="a" style="left:254px;top:973px;" width="18" height="18" viewBox="0 0 18 18"><ellipse cx="8" cy="10" rx="4" ry="5.2" fill="#afb1b3"/><circle cx="8" cy="4.5" r="2.6" fill="#afb1b3"/><path d="M1.5 6.500l3.5 2M14.5 6.500l-3.5 2M1 11h3.500M15 11h-3.500M2 15.500l3.2-2M14 15.500l-3.2-2M5.5 1.500l1.3 1.800M10.5 1.500L9.2 3.3" stroke="#afb1b3" stroke-width="1.3"/><circle cx="13.8" cy="15" r="2.5" fill="#1fe01f"/></svg>
<span class="t" style="left:275px;top:973px;font-size:13.89px;color:#ffffff;letter-spacing:0.122px;">Debug</span>
<svg class="a" style="left:342px;top:975px;" width="16" height="14" viewBox="0 0 16 14"><path d="M1 2.500h2.500M5.5 2.500h9M1 7h2.500M5.5 7h9M1 11.500h2.500M5.5 11.500h9" stroke="#afb1b3" stroke-width="2"/></svg>
<span class="t" style="left:362.5px;top:973px;font-size:13.89px;letter-spacing:0.039px;">TODO</span>
<svg class="a" style="left:427px;top:974px;" width="15" height="15" viewBox="0 0 15 15"><circle cx="7.5" cy="7.5" r="6.8" fill="#afb1b3"/><path d="M7.5 3.500v5" stroke="#3c3f41" stroke-width="1.8"/><circle cx="7.5" cy="11" r="1.1" fill="#3c3f41"/></svg>
<span class="t" style="left:447.8px;top:973px;font-size:13.89px;letter-spacing:-0.139px;">Problems</span>
<svg class="a" style="left:531.5px;top:974.5px;" width="16" height="14" viewBox="0 0 16 14"><rect x="0.5" y="0.5" width="14.5" height="12.5" fill="#afb1b3"/><path d="M3 3.500l3 2.8-3 2.800M7.5 10h4.5" fill="none" stroke="#3c3f41" stroke-width="1.3"/></svg>
<span class="t" style="left:552.5px;top:973px;font-size:13.89px;letter-spacing:0.133px;">Terminal</span>
<svg class="a" style="left:628px;top:973px;" width="18" height="18" viewBox="0 0 18 18"><path d="M12.5 4A6 6 0 1 0 8 13.5" fill="none" stroke="#afb1b3" stroke-width="1.5"/><path d="M7.5 4.500v4H4.5" fill="none" stroke="#afb1b3" stroke-width="1.4"/><path d="M9.5 7.500v9.500l7.5-4.750z" fill="#afb1b3"/></svg>
<span class="t" style="left:650px;top:973px;font-size:13.89px;letter-spacing:0.131px;">Profiler</span>
<svg class="a" style="left:719.5px;top:973.5px;" width="18" height="17" viewBox="0 0 18 17"><path d="M5 1h8l4 7.5-4 7.500H5L1 8.500z" fill="#afb1b3"/><path d="M6.8 4.800v7.400l6-3.700z" fill="#3c3f41"/></svg>
<span class="t" style="left:740.8px;top:973px;font-size:13.89px;letter-spacing:-0.277px;">Services</span>
<svg class="a" style="left:814px;top:973px;" width="18" height="18" viewBox="0 0 18 18"><path d="M2 5l4-4 3.5 1.2-3 3 9.5 9.5-2 2L4.5 7.2 3.3 8.400z" fill="#afb1b3"/></svg>
<span class="t" style="left:835.8px;top:973px;font-size:13.89px;letter-spacing:0.028px;">Build</span>
<div class="a" style="left:0px;top:995px;width:1920px;height:25px;background:#3c3f41;"></div>
<svg class="a" style="left:14px;top:999px;" width="18" height="18" viewBox="0 0 18 18"><rect x="1.5" y="4.5" width="11.5" height="11.5" fill="none" stroke="#afb1b3" stroke-width="1.3"/><path d="M4.5 4.500V1.500H16v11.500h-3" fill="none" stroke="#afb1b3" stroke-width="1.3"/></svg>
<span class="t" style="left:1627.5px;top:998px;font-size:15.9px;letter-spacing:0.016px;">61:1</span>
<span class="t" style="left:1673.5px;top:998px;font-size:15.9px;letter-spacing:-1.000px;">CRLF</span>
<span class="t" style="left:1724.5px;top:998px;font-size:15.9px;letter-spacing:-0.206px;">UTF-8</span>
<span class="t" style="left:1782.5px;top:998px;font-size:15.9px;letter-spacing:-0.076px;">4 spaces</span>
<svg class="a" style="left:1858px;top:999px;" width="16" height="16" viewBox="0 0 16 16"><rect x="5" y="7.5" width="9.5" height="7" fill="#afb1b3"/><path d="M2.5 7.500V5a2.3 2.3 0 0 1 4.6 0v2.5" fill="none" stroke="#afb1b3" stroke-width="1.4"/></svg>
<svg class="a" style="left:1890px;top:1000px;" width="16" height="16" viewBox="0 0 16 16"><circle cx="8" cy="8" r="7.6" fill="#b4b6b8"/><path d="M8 3.500v5.5" stroke="#3c3f41" stroke-width="2"/><circle cx="8" cy="11.8" r="1.2" fill="#3c3f41"/></svg>
<div class="a" style="left:0;top:1020px;width:1920px;height:9px;background:linear-gradient(90deg,#e2e4f2 0%,#e2e4f2 11%,#eee3df 15.5%,#f0e2dc 20%,#e8e1df 23.5%,#e6e1df 33%,#e7e0df 55%,#e0dee2 62%,#dedddf 70%,#e1e2f0 75%,#e3e3f1 78.5%,#f3e1e8 82%,#f1e1e8 85%,#e4e4f0 88.5%,#e4e4f0 100%)"></div>
<div class="a" style="left:0px;top:1019.5px;width:1920px;height:1px;background:#8d8e90;opacity:.5"></div>
<div class="a" style="left:1105px;top:1026px;width:47px;height:3px;background:#f5f5f5;border-radius:4px 4px 0 0"></div>
</footer></body></html>
